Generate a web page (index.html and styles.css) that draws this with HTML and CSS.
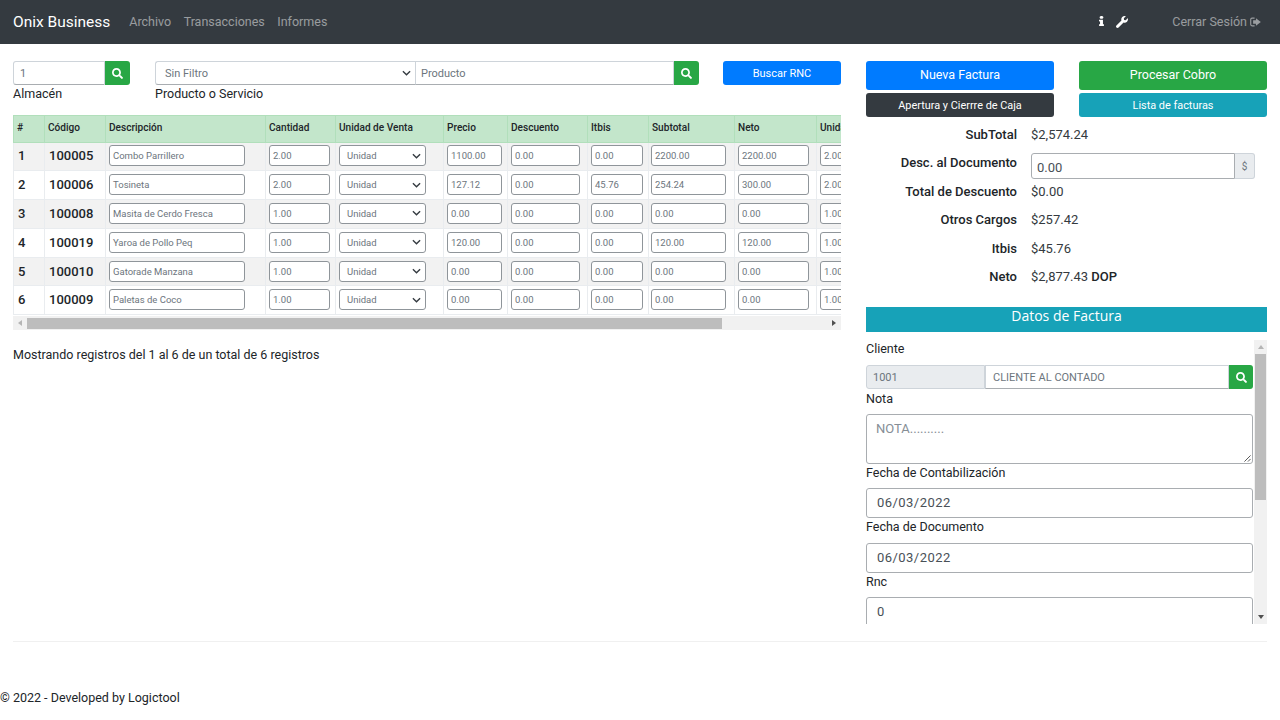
FILE: index.html
```html
<!DOCTYPE html>
<html lang="es">
<head>
<meta charset="utf-8">
<title>Onix Business</title>
<link rel="stylesheet" href="styles.css">
</head>
<body>
<svg class="defs" aria-hidden="true"><defs>
<symbol id="i-search" viewBox="0 0 512 512"><path d="M505 442.7L405.3 343c-4.5-4.5-10.6-7-17-7H372c27.6-35.3 44-79.7 44-128C416 93.1 322.9 0 208 0S0 93.1 0 208s93.1 208 208 208c48.3 0 92.7-16.4 128-44v16.3c0 6.4 2.5 12.5 7 17l99.7 99.7c9.4 9.4 24.6 9.4 33.9 0l28.3-28.3c9.4-9.4 9.4-24.6.1-34zM208 336c-70.7 0-128-57.2-128-128 0-70.7 57.2-128 128-128 70.7 0 128 57.2 128 128 0 70.7-57.2 128-128 128z"/></symbol>
</defs></svg>
<nav class="navbar">
  <span class="brand">Onix Business</span>
  <a class="nav-link">Archivo</a>
  <a class="nav-link">Transacciones</a>
  <a class="nav-link">Informes</a>
  <span class="nav-space"></span>
  <svg class="nav-info" viewBox="0 0 192 512" preserveAspectRatio="none"><path d="M20 424.229h20V279.771H20c-11.046 0-20-8.954-20-20V212c0-11.046 8.954-20 20-20h112c11.046 0 20 8.954 20 20v212.229h20c11.046 0 20 8.954 20 20V492c0 11.046-8.954 20-20 20H20c-11.046 0-20-8.954-20-20v-47.771c0-11.046 8.954-20 20-20zM96 0C56.235 0 24 32.235 24 72s32.235 72 72 72 72-32.235 72-72S135.764 0 96 0z"/></svg>
  <svg class="nav-wrench" viewBox="0 0 512 512"><path d="M507.73 109.1c-2.24-9.03-13.54-12.09-20.12-5.51l-74.36 74.36-67.88-11.31-11.31-67.88 74.36-74.36c6.62-6.62 3.43-17.9-5.66-20.16-47.38-11.74-99.55.91-136.58 37.93-39.64 39.64-50.55 97.1-34.05 147.2L18.74 402.76c-24.99 24.99-24.99 65.51 0 90.5 24.99 24.99 65.51 24.99 90.5 0l213.21-213.21c50.12 16.71 107.47 5.68 147.37-34.22 37.07-37.07 49.7-89.32 37.91-136.73z"/></svg>
  <a class="nav-link logout">Cerrar Sesión
    <svg class="nav-out" viewBox="0 0 12 10"><path class="out-frame" d="M5 .8H2.2C1.400 .8.800 1.400.800 2.200v5.600c0 .8.600 1.400 1.400 1.400H5"/><path d="M6.500 .8 11.800 5 6.500 9.200V6.800H3.400V3.200h3.100z"/></svg>
  </a>
</nav>
<main class="content">
  <section class="left">
    <div class="filters">
      <div class="f-store">
        <div class="igroup">
          <span class="ctrl grow txt-muted">1</span>
          <span class="btn-search"><svg class="ico"><use href="#i-search"/></svg></span>
        </div>
        <label class="lbl">Almacén</label>
      </div>
      <div class="f-prod">
        <div class="igroup">
          <span class="ctrl f-select txt-muted">Sin Filtro
            <svg class="chev" viewBox="0 0 10 6"><path d="M1 1l4 4 4-4"/></svg>
          </span>
          <span class="ctrl grow ph">Producto</span>
          <span class="btn-search"><svg class="ico"><use href="#i-search"/></svg></span>
        </div>
        <label class="lbl">Producto o Servicio</label>
      </div>
      <button class="btn-rnc">Buscar RNC</button>
    </div>

    <div class="table-wrap">
      <table class="grid">
        <colgroup>
          <col class="c1"><col class="c2"><col class="c3"><col class="c4"><col class="c5"><col class="c6"><col class="c7"><col class="c8"><col class="c9"><col class="c10"><col class="c11">
        </colgroup>
        <thead>
          <tr><th>#</th><th>Código</th><th>Descripción</th><th>Cantidad</th><th>Unidad de Venta</th><th>Precio</th><th>Descuento</th><th>Itbis</th><th>Subtotal</th><th>Neto</th><th>Unidad</th></tr>
        </thead>
        <tbody>
          <tr><td class="num">1</td><td class="num">100005</td><td><span class="cell">Combo Parrillero</span></td><td><span class="cell">2.00</span></td><td><span class="cell sel">Unidad<svg class="chev" viewBox="0 0 10 6"><path d="M1 1l4 4 4-4"/></svg></span></td><td><span class="cell">1100.00</span></td><td><span class="cell">0.00</span></td><td><span class="cell">0.00</span></td><td><span class="cell">2200.00</span></td><td><span class="cell">2200.00</span></td><td><span class="cell">2.00</span></td></tr>
          <tr><td class="num">2</td><td class="num">100006</td><td><span class="cell">Tosineta</span></td><td><span class="cell">2.00</span></td><td><span class="cell sel">Unidad<svg class="chev" viewBox="0 0 10 6"><path d="M1 1l4 4 4-4"/></svg></span></td><td><span class="cell">127.12</span></td><td><span class="cell">0.00</span></td><td><span class="cell">45.76</span></td><td><span class="cell">254.24</span></td><td><span class="cell">300.00</span></td><td><span class="cell">2.00</span></td></tr>
          <tr><td class="num">3</td><td class="num">100008</td><td><span class="cell">Masita de Cerdo Fresca</span></td><td><span class="cell">1.00</span></td><td><span class="cell sel">Unidad<svg class="chev" viewBox="0 0 10 6"><path d="M1 1l4 4 4-4"/></svg></span></td><td><span class="cell">0.00</span></td><td><span class="cell">0.00</span></td><td><span class="cell">0.00</span></td><td><span class="cell">0.00</span></td><td><span class="cell">0.00</span></td><td><span class="cell">1.00</span></td></tr>
          <tr><td class="num">4</td><td class="num">100019</td><td><span class="cell">Yaroa de Pollo Peq</span></td><td><span class="cell">1.00</span></td><td><span class="cell sel">Unidad<svg class="chev" viewBox="0 0 10 6"><path d="M1 1l4 4 4-4"/></svg></span></td><td><span class="cell">120.00</span></td><td><span class="cell">0.00</span></td><td><span class="cell">0.00</span></td><td><span class="cell">120.00</span></td><td><span class="cell">120.00</span></td><td><span class="cell">1.00</span></td></tr>
          <tr><td class="num">5</td><td class="num">100010</td><td><span class="cell">Gatorade Manzana</span></td><td><span class="cell">1.00</span></td><td><span class="cell sel">Unidad<svg class="chev" viewBox="0 0 10 6"><path d="M1 1l4 4 4-4"/></svg></span></td><td><span class="cell">0.00</span></td><td><span class="cell">0.00</span></td><td><span class="cell">0.00</span></td><td><span class="cell">0.00</span></td><td><span class="cell">0.00</span></td><td><span class="cell">1.00</span></td></tr>
          <tr><td class="num">6</td><td class="num">100009</td><td><span class="cell">Paletas de Coco</span></td><td><span class="cell">1.00</span></td><td><span class="cell sel">Unidad<svg class="chev" viewBox="0 0 10 6"><path d="M1 1l4 4 4-4"/></svg></span></td><td><span class="cell">0.00</span></td><td><span class="cell">0.00</span></td><td><span class="cell">0.00</span></td><td><span class="cell">0.00</span></td><td><span class="cell">0.00</span></td><td><span class="cell">1.00</span></td></tr>
        </tbody>
      </table>
    </div>
    <div class="hbar">
      <span class="arrow-l"></span>
      <span class="hthumb"></span>
      <span class="arrow-r"></span>
    </div>
    <p class="info">Mostrando registros del 1 al 6 de un total de 6 registros</p>
  </section>

  <aside class="right">
    <div class="actions">
      <button class="btn big blue">Nueva Factura</button>
      <button class="btn big green">Procesar Cobro</button>
      <button class="btn small dark">Apertura y Cierrre de Caja</button>
      <button class="btn small teal">Lista de facturas</button>
    </div>
    <dl class="totals">
      <dt>SubTotal</dt><dd>$2,574.24</dd>
      <dt class="dt-input">Desc. al Documento</dt>
      <dd class="dd-input"><span class="disc">0.00</span><span class="disc-add">$</span></dd>
      <dt>Total de Descuento</dt><dd>$0.00</dd>
      <dt>Otros Cargos</dt><dd>$257.42</dd>
      <dt>Itbis</dt><dd>$45.76</dd>
      <dt>Neto</dt><dd>$2,877.43 <b class="cur">DOP</b></dd>
    </dl>
    <h2 class="panel-title">Datos de Factura</h2>
    <div class="panel">
      <div class="panel-body">
        <label class="plbl first">Cliente</label>
        <div class="igroup client">
          <span class="ctrl c-code">1001</span>
          <span class="ctrl grow c-name">CLIENTE AL CONTADO</span>
          <span class="btn-search btn-client"><svg class="ico"><use href="#i-search"/></svg></span>
        </div>
        <label class="plbl">Nota</label>
        <div class="note">NOTA..........
          <svg class="grip" viewBox="0 0 8 8"><path d="M7.500 .5.500 7.500M7.500 4.500l-3 3"/></svg>
        </div>
        <label class="plbl">Fecha de Contabilización</label>
        <div class="field date">06/03/2022</div>
        <label class="plbl">Fecha de Documento</label>
        <div class="field date">06/03/2022</div>
        <label class="plbl">Rnc</label>
        <div class="field">0</div>
      </div>
      <div class="vbar">
        <span class="arrow-u"></span>
        <span class="vthumb"></span>
        <span class="arrow-d"></span>
      </div>
    </div>
  </aside>
</main>
<hr class="rule">
<footer class="foot">© 2022 - Developed by Logictool</footer>
</body>
</html>
```
FILE: styles.css
```css
* { box-sizing: border-box; }
html, body { margin: 0; height: 720px; overflow: hidden; }
body { font-family: Roboto, "Liberation Sans", sans-serif; font-size: 12.5px; color: #212529; background: #fff; }
.defs { display: none; }

.navbar { height: 44px; background: #343a40; display: flex; align-items: center; padding: 0 19px 1px 13px; }
.brand { color: #fff; font-size: 15.5px; font-weight: 400; margin-right: 19px; }
.nav-link { color: rgba(255,255,255,.5); font-size: 12.5px; margin-right: 12.5px; }
.nav-space { flex: 1; }
.nav-info { width: 5px; height: 10px; fill: #fff; margin-right: 12px; margin-top: -2px; }
.nav-wrench { width: 12px; height: 12px; fill: #fff; margin-right: 44px; }
.logout { margin: 0; display: flex; align-items: center; gap: 3px; }
.nav-out { width: 11px; height: 10px; fill: rgba(255,255,255,.5); }
.out-frame { fill: none; stroke: rgba(255,255,255,.5); stroke-width: 1.2; }

.content { display: flex; padding: 17px 13px 0; gap: 25px; height: 597px; }
.left { width: 828px; flex: none; }
.right { width: 401px; flex: none; }

.filters { display: flex; align-items: flex-start; height: 54px; }
.f-store { width: 117px; margin-right: 25px; }
.f-prod { width: 544px; margin-right: 24px; }
.igroup { display: flex; height: 24px; }
.lbl { display: block; font-size: 12.5px; line-height: 18px; }
.ctrl { display: flex; align-items: center; height: 100%; border: 1px solid #ced4da; border-bottom-color: #a9adb1; font-size: 11px; color: #495057; background: #fff; padding: 0 6px; }
.grow { flex: 1; min-width: 0; }
.txt-muted { color: #6c757d; }
.igroup .ctrl:first-child { border-radius: 3px 0 0 3px; }
.f-select { width: 260px; justify-content: space-between; padding: 0 4px 0 9px; border-right: 0; }
.ph { color: #6c757d; padding-left: 5px; }
.btn-search { width: 25px; height: 100%; background: #28a745; border-radius: 0 3px 3px 0; display: flex; align-items: center; justify-content: center; flex: none; }
.btn-client { width: 24px; }
.ico { width: 11px; height: 11px; fill: #fff; display: block; }
.chev { width: 9px; height: 6px; fill: none; stroke: #343a40; stroke-width: 1.5; flex: none; }
.btn-rnc { width: 118px; height: 24px; background: #007bff; color: #fff; border: 0; border-radius: 3px; font: 400 11px Roboto, sans-serif; }

.table-wrap { overflow: hidden; width: 828px; }
.grid { border-collapse: collapse; table-layout: fixed; width: 890px; }
.c1 { width: 31px; } .c2 { width: 61px; } .c3 { width: 160px; } .c4 { width: 70px; } .c5 { width: 108px; }
.c6 { width: 64px; } .c7 { width: 80px; } .c8 { width: 61px; } .c9 { width: 86px; } .c10 { width: 82px; } .c11 { width: 87px; }
.grid th { height: 26.5px; background: #c3e6cb; border: 1px solid #b1dfbb; font-size: 10.1px; font-weight: 500; text-align: left; padding: 0 3px 2px; color: #212529; white-space: nowrap; }
.grid td { height: 28.8px; padding: 0 3px 1px; border: 1px solid #e9ecef; vertical-align: middle; font-size: 9.5px; }
.grid tbody tr:nth-child(odd) td { background: #f2f2f2; }
.grid td.num { font-size: 13px; font-weight: 500; color: #212529; padding-left: 4px; }
.cell { display: flex; align-items: center; justify-content: space-between; width: 70px; height: 21px; background: #fff; border: 1px solid #8f959a; border-radius: 3px; padding: 0 3px; color: #6c757d; font-size: 9.5px; white-space: nowrap; overflow: hidden; }
.sel { padding: 0 4px 0 7px; }
.grid td:nth-child(3) .cell { width: 136px; }
.grid td:nth-child(4) .cell { width: 60.5px; }
.grid td:nth-child(5) .cell { width: 87px; }
.grid td:nth-child(6) .cell { width: 55px; }
.grid td:nth-child(7) .cell { width: 68.5px; }
.grid td:nth-child(8) .cell { width: 52px; }
.grid td:nth-child(9) .cell { width: 74.5px; margin-left: -1px; }
.grid td:nth-child(10) .cell { width: 70.5px; }

.hbar { height: 14px; margin-top: 1px; background: #f1f1f1; display: flex; align-items: center; }
.arrow-l { width: 14px; display: flex; justify-content: center; }
.arrow-l::before { content: ""; border: 3px solid transparent; border-right: 4px solid #b5b5b5; border-left: 0; }
.hthumb { width: 695px; height: 11px; background: #bdbdbd; }
.arrow-r { margin-left: auto; width: 14px; display: flex; justify-content: center; }
.arrow-r::before { content: ""; border: 3px solid transparent; border-left: 4px solid #505050; border-right: 0; }
.info { margin: 17px 0 0; font-size: 12.5px; line-height: 15px; }

.actions { display: grid; grid-template-columns: 188px 188px; column-gap: 25px; row-gap: 3px; }
.btn { border: 0; color: #fff; border-radius: 3px; font-family: Roboto, sans-serif; font-weight: 400; padding: 0; }
.big { height: 29px; font-size: 12.5px; padding-bottom: 2px; }
.small { height: 24px; font-size: 10.9px; }
.blue { background: #007bff; } .green { background: #28a745; } .dark { background: #343a40; } .teal { background: #17a2b8; }

.totals { display: grid; grid-template-columns: 151px 1fr; column-gap: 14px; margin: 0; padding-top: 4px; align-items: start; }
.totals dt { text-align: right; font-weight: 500; font-size: 13px; line-height: 28.4px; }
.totals dd { margin: 0; font-size: 13px; line-height: 28.4px; color: #343a40; }
.cur { font-weight: 500; color: #212529; }
.dd-input { display: flex; height: 28.4px; padding-top: 4px; width: 224px; }
.disc { flex: 1; height: 26px; border: 1px solid #a9adb1; border-radius: 3px 0 0 3px; padding: 0 5px; line-height: 28px; color: #495057; font-size: 13px; }
.disc-add { width: 20px; height: 26px; background: #e9ecef; border: 1px solid #ced4da; border-left: 0; border-radius: 0 3px 3px 0; text-align: center; font-size: 10px; line-height: 26px; color: #6c757d; }

.panel-title { margin: 16px 0 0; height: 25px; background: #17a2b8; color: #fff; font-family: "Open Sans", Roboto, sans-serif; font-size: 14px; font-weight: 400; text-align: center; line-height: 18px; }
.panel { display: flex; margin-top: 8px; height: 284px; overflow: hidden; }
.panel-body { width: 387px; flex: none; }
.plbl { display: block; font-size: 12.5px; line-height: 16px; padding: 1px 0; }
.first { padding-top: 1px; margin-bottom: 7px; }
.client { height: 24px; margin-bottom: .5px; }
.c-code { width: 119px; flex: none; background: #e9ecef; color: #6c757d; border-color: #ced4da; font-size: 11px; }
.c-name { padding-left: 7px; font-size: 11px; color: #6c757d; }
.note { position: relative; height: 49.5px; border: 1px solid #a9adb1; border-radius: 3px; padding: 6px 9px; color: #868e96; font-size: 13px; margin-top: 6.5px; }
.grip { position: absolute; right: 1px; bottom: 1px; width: 7px; height: 7px; fill: none; stroke: #444; stroke-width: 1; }
.field { height: 30px; border: 1px solid #a9adb1; border-radius: 3px; padding: 0 10px; line-height: 28px; color: #495057; font-size: 13px; margin-top: 6.4px; }
.date { letter-spacing: .45px; }
.vbar { width: 13px; margin-left: 1px; background: #f1f1f1; display: flex; flex-direction: column; align-items: center; }
.arrow-u { height: 14px; display: flex; align-items: center; }
.arrow-u::before { content: ""; border: 3px solid transparent; border-bottom: 4px solid #b5b5b5; border-top: 0; }
.vthumb { width: 11px; height: 146px; background: #bdbdbd; }
.arrow-d { margin-top: auto; height: 14px; display: flex; align-items: center; }
.arrow-d::before { content: ""; border: 3px solid transparent; border-top: 4px solid #505050; border-bottom: 0; }

.rule { margin: 0 13px; border: 0; border-top: 1px solid #f0f0f0; }
.foot { margin-top: 48px; font-size: 12.5px; line-height: 16px; color: #212529; }
```
